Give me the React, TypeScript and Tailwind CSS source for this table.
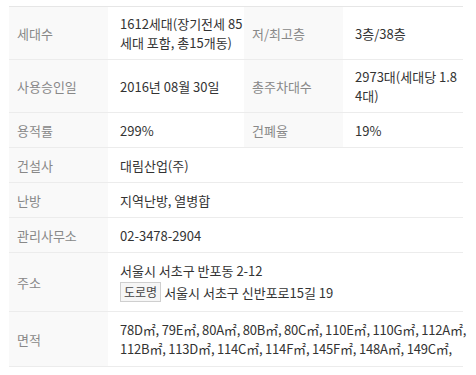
const rows: { label: string; value: React.ReactNode; label2?: string; value2?: React.ReactNode; pad?: string }[] = [
  {
    label: "세대수",
    value: (
      <>
        <span>1612세대(장기전세 85</span>
        <span>세대 포함, 총15개동)</span>
      </>
    ),
    label2: "저/최고층",
    value2: "3층/38층",
  },
  {
    label: "사용승인일",
    value: "2016년 08월 30일",
    label2: "총주차대수",
    value2: (
      <>
        <span>2973대(세대당 1.8</span>
        <span>4대)</span>
      </>
    ),
  },
  { label: "용적률", value: "299%", label2: "건폐율", value2: "19%" },
  { label: "건설사", value: "대림산업(주)" },
  { label: "난방", value: "지역난방, 열병합" },
  { label: "관리사무소", value: "02-3478-2904" },
  {
    label: "주소",
    pad: "pt-[8px] pb-[9px]",
    value: (
      <>
        <div>서울시 서초구 반포동 2-12</div>
        <div className="mt-[2px] flex items-center gap-[3px]">
          <span className="border border-[#cfcfcf] bg-[#f6f6f6] px-[3px] text-[12px] leading-[18px] text-[#444]">도로명</span>
          <span>서울시 서초구 신반포로15길 19</span>
        </div>
      </>
    ),
  },
  {
    label: "면적",
    pad: "py-2 tracking-[-0.2px] whitespace-nowrap",
    value: (
      <>
        <span>78D㎡, 79E㎡, 80A㎡, 80B㎡, 80C㎡, 110E㎡, 110G㎡, 112A㎡,</span>
        <span>112B㎡, 113D㎡, 114C㎡, 114F㎡, 145F㎡, 148A㎡, 149C㎡,</span>
      </>
    ),
  },
];

function Label({ children }: { children: React.ReactNode }) {
  return <div className="flex items-center bg-[#f9f9f9] pl-2 text-[#888]">{children}</div>;
}

export default function App() {
  return (
    <div
      className="w-[476px] h-[375px] bg-white pt-[6px] pl-[9px] text-[13px] leading-[19px]"
      style={{ fontFamily: '"Noto Sans CJK KR", "Noto Sans", sans-serif' }}
    >
      <div className="w-[454px] border-t border-[#e6e6e6]">
        {rows.map((r) => (
          <div
            key={r.label}
            className="grid grid-cols-[99px_136px_99px_120px] border-b border-[#ececec] min-h-[35px]"
          >
            <Label>{r.label}</Label>
            {r.label2 ? (
              <>
                <div className="flex flex-col justify-center py-[7px] pl-3 text-[#333] whitespace-nowrap">{r.value}</div>
                <Label>{r.label2}</Label>
                <div className="flex flex-col justify-center py-[7px] pl-3 text-[#333] whitespace-nowrap">{r.value2}</div>
              </>
            ) : (
              <div className={`col-span-3 flex flex-col justify-center pl-3 text-[#333] ${r.pad ?? "py-[7px]"}`}>
                {r.value}
              </div>
            )}
          </div>
        ))}
      </div>
    </div>
  );
}
